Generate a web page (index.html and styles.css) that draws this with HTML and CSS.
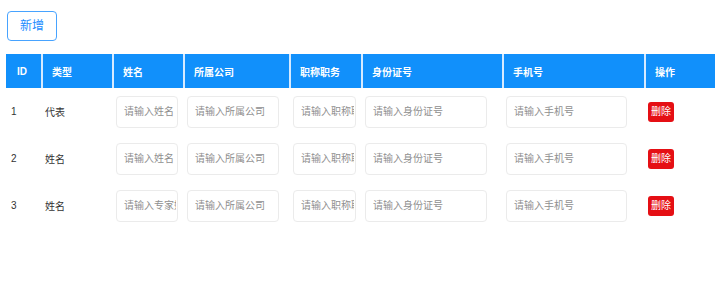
FILE: index.html
```html
<!DOCTYPE html>
<html lang="zh-CN">
<head>
<meta charset="utf-8">
<title>列表</title>
<link rel="stylesheet" href="styles.css">
</head>
<body>
<div class="page">
  <div class="toolbar">
    <button class="btn-add" type="button">新增</button>
  </div>
  <table class="grid">
    <colgroup>
      <col class="c-id"><col class="c-type"><col class="c-name"><col class="c-company"><col class="c-title"><col class="c-idno"><col class="c-phone"><col class="c-op">
    </colgroup>
    <thead>
      <tr>
        <th>ID</th><th>类型</th><th>姓名</th><th>所属公司</th><th>职称职务</th><th>身份证号</th><th>手机号</th><th>操作</th>
      </tr>
    </thead>
    <tbody>
      <tr>
        <td class="num">1</td>
        <td class="type">代表</td>
        <td><input class="in in-name" placeholder="请输入姓名"></td>
        <td><input class="in in-company" placeholder="请输入所属公司"></td>
        <td><input class="in in-title" placeholder="请输入职称职务"></td>
        <td><input class="in in-idno" placeholder="请输入身份证号"></td>
        <td><input class="in in-phone" placeholder="请输入手机号"></td>
        <td><button class="btn-del" type="button">删除</button></td>
      </tr>
      <tr>
        <td class="num">2</td>
        <td class="type">姓名</td>
        <td><input class="in in-name" placeholder="请输入姓名"></td>
        <td><input class="in in-company" placeholder="请输入所属公司"></td>
        <td><input class="in in-title" placeholder="请输入职称职务"></td>
        <td><input class="in in-idno" placeholder="请输入身份证号"></td>
        <td><input class="in in-phone" placeholder="请输入手机号"></td>
        <td><button class="btn-del" type="button">删除</button></td>
      </tr>
      <tr>
        <td class="num">3</td>
        <td class="type">姓名</td>
        <td><input class="in in-name" placeholder="请输入专家姓名"></td>
        <td><input class="in in-company" placeholder="请输入所属公司"></td>
        <td><input class="in in-title" placeholder="请输入职称职务"></td>
        <td><input class="in in-idno" placeholder="请输入身份证号"></td>
        <td><input class="in in-phone" placeholder="请输入手机号"></td>
        <td><button class="btn-del" type="button">删除</button></td>
      </tr>
    </tbody>
  </table>
</div>
</body>
</html>
```
FILE: styles.css
```css
html, body {
  margin: 0;
  padding: 0;
  background: #ffffff;
}
body {
  font-family: "Liberation Sans", "Noto Sans CJK SC", sans-serif;
  color: #333333;
}
.page {
  padding: 11px 5px 0 6px;
}
.toolbar {
  padding-left: 1px;
  margin-bottom: 13px;
}
.btn-add {
  display: block;
  width: 50px;
  height: 30px;
  padding: 0;
  border: 1px solid #47a3ff;
  border-radius: 4px;
  background: #ffffff;
  color: #1a8cff;
  font-family: "Liberation Sans", "Noto Sans CJK SC", sans-serif;
  font-size: 12px;
  line-height: 28px;
}
.grid {
  width: 709px;
  table-layout: fixed;
  border-collapse: separate;
  border-spacing: 0;
  font-size: 10px;
}
.c-id { width: 35px; }
.c-type { width: 71px; }
.c-name { width: 71px; }
.c-company { width: 106px; }
.c-title { width: 72px; }
.c-idno { width: 141px; }
.c-phone { width: 142px; }
.c-op { width: 71px; }
.grid th {
  height: 34px;
  padding: 0 0 0 11px;
  background: #1190fb;
  color: #ffffff;
  font-weight: bold;
  font-size: 10px;
  text-align: left;
  white-space: nowrap;
}
.grid th + th {
  box-shadow: inset 2px 0 0 #d6eaff;
}
.grid td {
  height: 47px;
  padding: 0 0 0 4px;
  vertical-align: middle;
  white-space: nowrap;
  overflow: hidden;
  color: #333333;
}
.grid td.num {
  padding-left: 5px;
}
.in {
  display: block;
  box-sizing: border-box;
  height: 32px;
  padding: 0 1px 0 7px;
  border: 1px solid #ebebeb;
  border-radius: 4px;
  background: #ffffff;
  font-family: "Liberation Sans", "Noto Sans CJK SC", sans-serif;
  font-size: 10px;
  color: #333333;
  outline: none;
}
.in::placeholder {
  color: #8f8f8f;
}
.in-name { width: 62px; }
.in-company { width: 92px; }
.in-title { width: 63px; }
.in-idno { width: 122px; }
.in-phone { width: 121px; }
.btn-del {
  display: block;
  width: 26px;
  height: 20px;
  padding: 0;
  border: none;
  border-radius: 3px;
  background: #e50f14;
  color: #ffffff;
  font-family: "Liberation Sans", "Noto Sans CJK SC", sans-serif;
  font-size: 10px;
  line-height: 20px;
  text-align: center;
}
```
